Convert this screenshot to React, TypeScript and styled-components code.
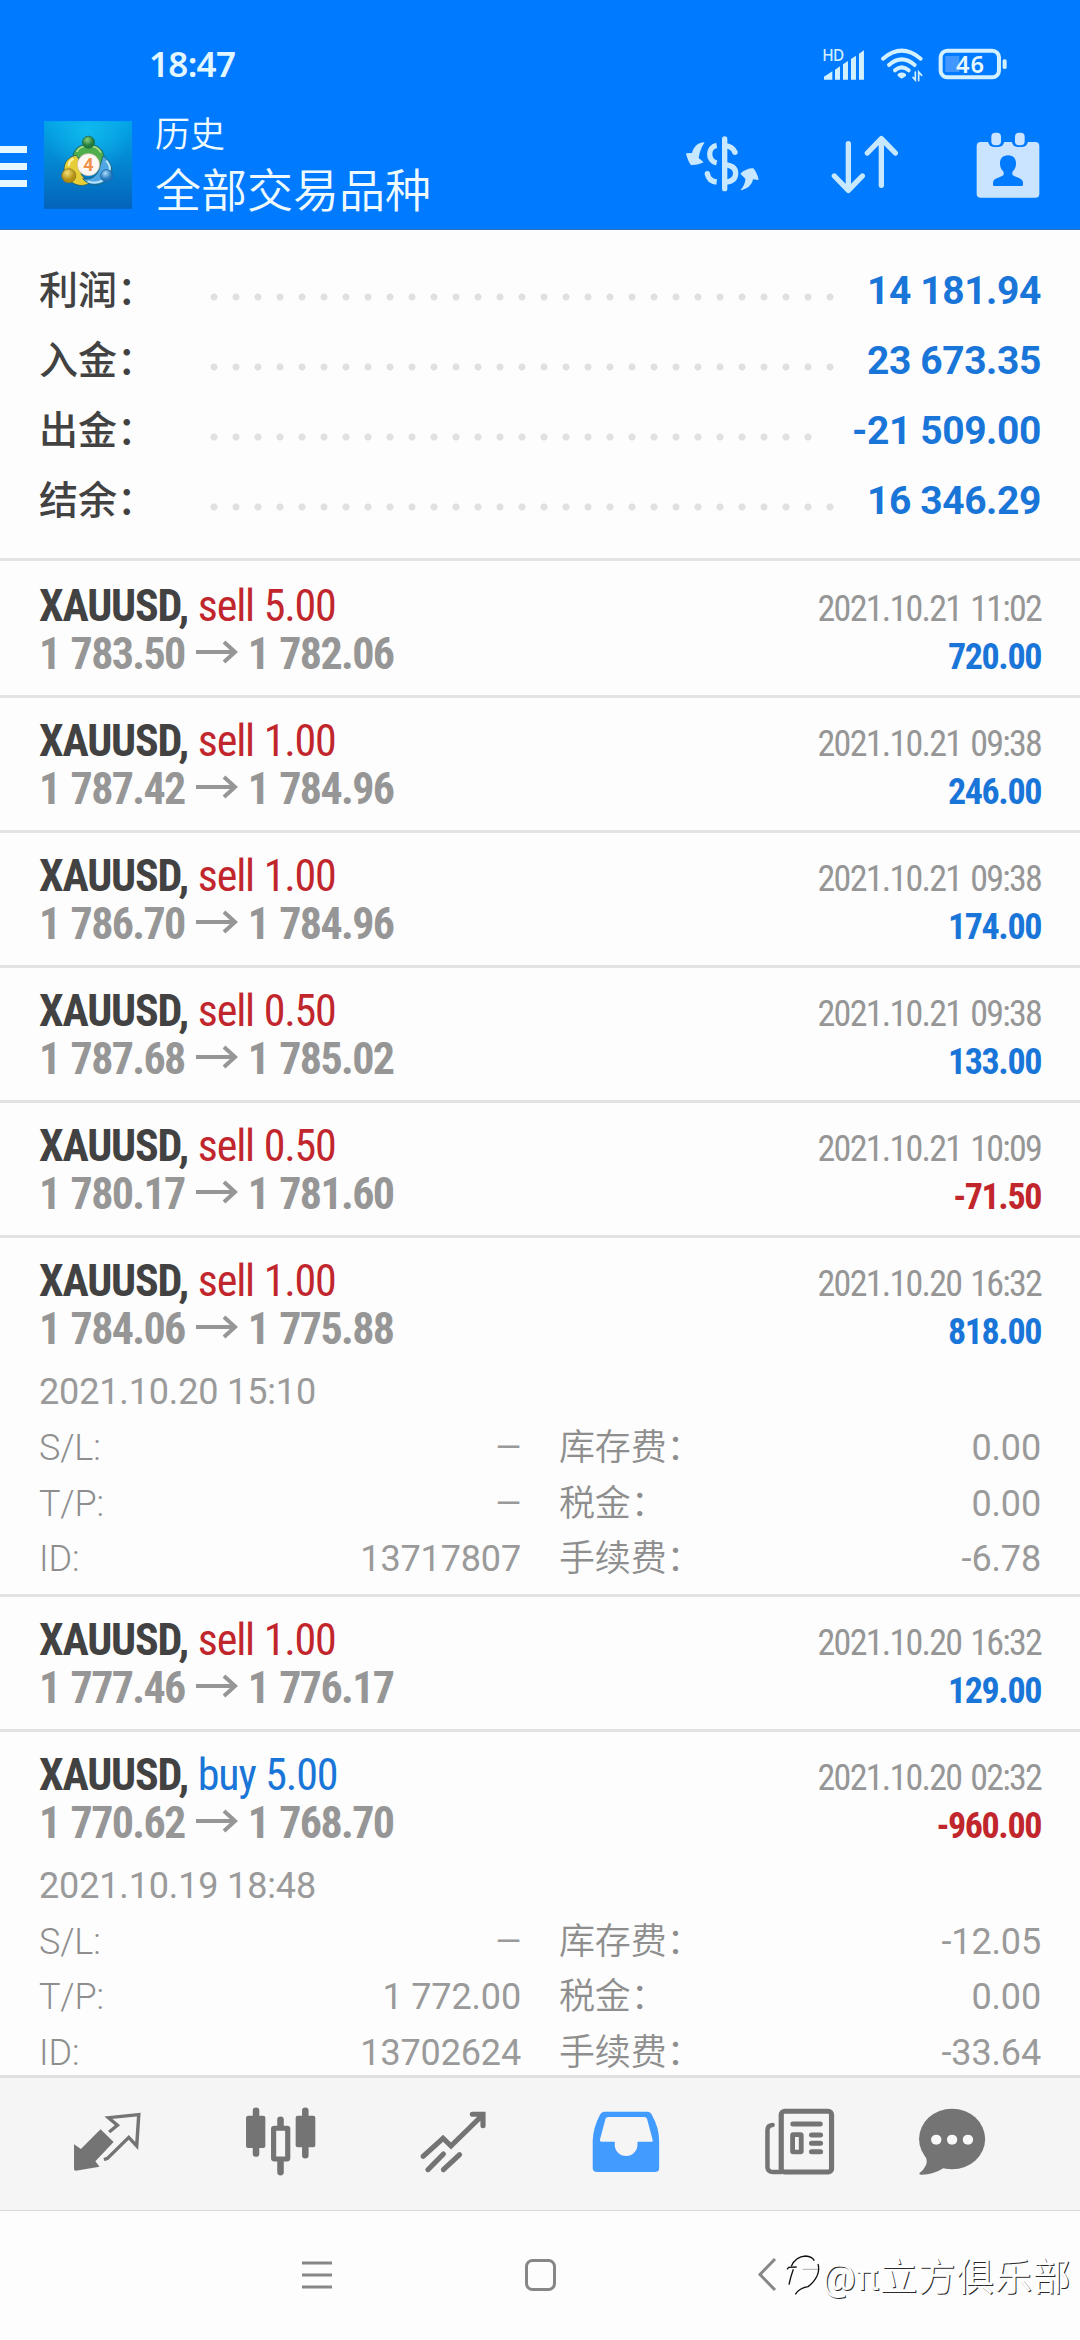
import React from "react";
import styled, { createGlobalStyle } from "styled-components";

const sans = `Roboto, "Noto Sans CJK SC", sans-serif`;
const condensed = `"Roboto Condensed", Roboto, "Noto Sans CJK SC", sans-serif`;

const GlobalStyle = createGlobalStyle`
  *, *::before, *::after { box-sizing: border-box; }
  body { margin: 0; background: #fdfdfd; }
  svg { display: block; flex: none; overflow: visible; }
`;

const Screen = styled.div`
  width: 1080px;
  height: 2340px;
  display: flex;
  flex-direction: column;
  overflow: hidden;
  background: #fdfdfd;
  font-family: ${sans};
`;

const Header = styled.header`
  flex: none;
  height: 230px;
  display: flex;
  flex-direction: column;
  background: #007aff;
  border-bottom: 1px solid #2a6fb5;
`;

const StatusBar = styled.div`
  height: 108px;
  padding: 20px 73px 0 149px;
  display: flex;
  align-items: center;
  gap: 14px;
  color: #d3f0ff;
`;

const Clock = styled.span`
  flex: 1;
  font: 600 35px/40px "Noto Sans", sans-serif;
  letter-spacing: -0.7px;
  color: #e2f7ff;
`;

const Toolbar = styled.div`
  flex: 1;
  padding-right: 40px;
  display: flex;
  align-items: center;
  color: #c8e8ff;
`;

const MenuBars = styled.div`
  width: 27px;
  height: 41px;
  margin: -4px 17px 0 0;
  display: flex;
  flex-direction: column;
  justify-content: space-between;
`;

const MenuBar = styled.span`
  height: 7px;
  background: #e6f8ff;
`;

const AppIcon = styled.svg`
  width: 88px;
  height: 88px;
  margin-top: -7px;
`;

const Titles = styled.div`
  flex: 1;
  margin: -4px 0 0 23px;
  color: #effaff;
`;

const Caption = styled.div`
  font-size: 35px;
  line-height: 48px;
  font-weight: 350;
`;

const Title = styled.div`
  font-size: 46px;
  line-height: 62px;
  font-weight: 350;
`;

const ToolIcon = styled.svg<{ $gap?: number; $lift?: number }>`
  margin-right: ${(p) => p.$gap ?? 0}px;
  margin-top: -${(p) => p.$lift ?? 0}px;
`;

const Summary = styled.section`
  flex: none;
  height: 331px;
  padding: 25px 39px 0;
  border-bottom: 3px solid #e3e3e3;
`;

const SummaryRow = styled.div`
  height: 70px;
  display: flex;
  align-items: center;
`;

const SummaryLabel = styled.span`
  width: 164px;
  padding-bottom: 7px;
  font-size: 39px;
  font-weight: 500;
  color: #424242;
`;

const Dots = styled.span`
  flex: 1;
  height: 8px;
  margin: 14px 28px 0 0;
  background: radial-gradient(circle at 11px 4px, #e0e0e0 3px, transparent 4px) 0 0 / 22px 8px repeat-x;
`;

const SummaryValue = styled.span`
  padding-top: 1px;
  font-size: 39px;
  font-weight: 700;
  letter-spacing: -0.4px;
  color: #1976d8;
`;

const List = styled.main`
  flex: 1;
  min-height: 0;
  overflow: hidden;
  padding-top: 2px;
`;

const Deal = styled.article<{ $open?: boolean }>`
  padding: 19px 39px ${(p) => (p.$open ? 7 : 17)}px;
  border-bottom: 3px solid #e3e3e3;
`;

const DealLine = styled.div`
  height: 48px;
  display: flex;
  justify-content: space-between;
  align-items: baseline;
  font-family: ${condensed};
  line-height: 48px;
  white-space: pre;
`;

const Instrument = styled.span`
  font-size: 44px;
  font-weight: 700;
  letter-spacing: -1.2px;
  word-spacing: 0.8px;
  color: #424242;
`;

const Side = styled.span<{ $side: "buy" | "sell" }>`
  font-weight: 400;
  color: ${(p) => (p.$side === "buy" ? "#1976d8" : "#c1262d")};
`;

const Prices = styled.span`
  display: flex;
  align-items: baseline;
  font-size: 44px;
  font-weight: 700;
  letter-spacing: -1.65px;
  word-spacing: 2.5px;
  color: #969696;
`;

const PriceArrow = styled.svg`
  width: 42px;
  height: 24px;
  margin: 0 10px 0 11px;
  transform: translateY(-5px);
`;

const DealTime = styled.span`
  font-size: 36px;
  letter-spacing: -1.75px;
  word-spacing: 2.5px;
  color: #969696;
`;

const Profit = styled.span<{ $loss: boolean }>`
  font-size: 36px;
  font-weight: 700;
  letter-spacing: -1.4px;
  color: ${(p) => (p.$loss ? "#c1262d" : "#1976d8")};
`;

const Details = styled.div`
  padding-top: 11px;
  font-size: 36px;
  line-height: 56px;
  font-weight: 400;
  letter-spacing: -0.15px;
  color: #9a9a9a;
`;

const DetailGrid = styled.div`
  display: grid;
  grid-template-columns: 482px 482px;
  grid-auto-rows: 55.6px;
  column-gap: 38px;
`;

const DetailCell = styled.div`
  display: flex;
  justify-content: space-between;
`;

const DetailLabel = styled.span`
  font-weight: 350;
  color: #8e8e8e;
`;

const Dash = styled.span`
  font-size: 33px;
`;

const TabBar = styled.nav`
  flex: none;
  height: 136px;
  padding: 0 21px;
  display: flex;
  align-items: center;
  background: #f5f5f5;
  border-top: 3px solid #e0e0e0;
  border-bottom: 1px solid #d8d8d8;
`;

const Tab = styled.div<{ $active?: boolean; $shift?: number }>`
  flex: none;
  width: 173px;
  padding-bottom: 5px;
  margin-left: ${(p) => p.$shift ?? 0}px;
  display: flex;
  justify-content: center;
  color: ${(p) => (p.$active ? "#429bff" : "#747474")};
`;

const SystemBar = styled.div`
  flex: none;
  height: 129px;
  padding: 0 0 2px 302px;
  display: flex;
  align-items: center;
  color: #878787;
`;

const SystemKey = styled.svg<{ $gap: number }>`
  margin-right: ${(p) => p.$gap}px;
`;

const Watermark = styled.div`
  display: flex;
  align-items: center;
  gap: 2px;
  font-size: 37.5px;
  line-height: 50px;
  color: #fff;
  text-shadow: 1px 1px 0 #2a2a2a;
  white-space: nowrap;
`;

const WatermarkText = styled.span`
  padding-top: 4px;
  letter-spacing: 0.8px;
`;

type DealInfo = {
  side: "buy" | "sell";
  lots: string;
  from: string;
  to: string;
  time: string;
  profit: string;
  details?: { opened: string; cells: [string, string][] };
};

const totals = [
  ["利润", "14 181.94"],
  ["入金", "23 673.35"],
  ["出金", "-21 509.00"],
  ["结余", "16 346.29"],
];

const deals: DealInfo[] = [
  { side: "sell", lots: "5.00", from: "1 783.50", to: "1 782.06", time: "2021.10.21 11:02", profit: "720.00" },
  { side: "sell", lots: "1.00", from: "1 787.42", to: "1 784.96", time: "2021.10.21 09:38", profit: "246.00" },
  { side: "sell", lots: "1.00", from: "1 786.70", to: "1 784.96", time: "2021.10.21 09:38", profit: "174.00" },
  { side: "sell", lots: "0.50", from: "1 787.68", to: "1 785.02", time: "2021.10.21 09:38", profit: "133.00" },
  { side: "sell", lots: "0.50", from: "1 780.17", to: "1 781.60", time: "2021.10.21 10:09", profit: "-71.50" },
  {
    side: "sell", lots: "1.00", from: "1 784.06", to: "1 775.88", time: "2021.10.20 16:32", profit: "818.00",
    details: {
      opened: "2021.10.20 15:10",
      cells: [["S/L:", "—"], ["库存费：", "0.00"], ["T/P:", "—"], ["税金：", "0.00"], ["ID:", "13717807"], ["手续费：", "-6.78"]],
    },
  },
  { side: "sell", lots: "1.00", from: "1 777.46", to: "1 776.17", time: "2021.10.20 16:32", profit: "129.00" },
  {
    side: "buy", lots: "5.00", from: "1 770.62", to: "1 768.70", time: "2021.10.20 02:32", profit: "-960.00",
    details: {
      opened: "2021.10.19 18:48",
      cells: [["S/L:", "—"], ["库存费：", "-12.05"], ["T/P:", "1 772.00"], ["税金：", "0.00"], ["ID:", "13702624"], ["手续费：", "-33.64"]],
    },
  },
];

const SignalIcon = () => (
  <svg width="43.3" height="32.7" viewBox="546 140 130 98" fill="currentColor">
    <text x="547" y="178" fontSize="46" fontWeight="500" fontFamily="Noto Sans, sans-serif" textLength="66">HD</text>
    <path d="M552 235V226L577 210V235ZM585 235V205L600 195V235ZM609 235V189L624 179V235ZM633 235V173L648 163V235ZM657 235V157L672 147V235Z" />
  </svg>
);

const WifiIcon = () => (
  <svg width="44" height="34.7" viewBox="718 143 132 104" fill="none" stroke="currentColor" strokeWidth="12" strokeLinecap="round">
    <path d="M727 178Q783 130 840 178M745 197Q783 163 822 197M763 213Q783 195 804 213" />
    <path d="M775 227Q783 221 792 227L783 233Z" strokeWidth="9" strokeLinejoin="round" />
    <path d="M824 218V242L817 234M834 244V218L843 228" strokeWidth="5" />
  </svg>
);

const BatteryIcon = () => (
  <svg width="69.3" height="32" viewBox="892 144 208 96">
    <rect x="914" y="168" width="42" height="48" fill="#4297ff" />
    <rect x="900" y="152" width="175" height="80" rx="20" fill="none" stroke="currentColor" strokeWidth="12" />
    <rect x="1086" y="178" width="12" height="29" rx="5" fill="currentColor" />
    <text x="946" y="219" fontSize="71" fontWeight="600" fontFamily="Noto Sans, sans-serif" textLength="84" fill="#e8f8ff">46</text>
  </svg>
);

const MetaLogo = () => (
  <AppIcon viewBox="0 0 263 262">
    <defs>
      <linearGradient id="tile" x1="0" y1="0" x2="0" y2="1">
        <stop offset="0" stopColor="#04a4e6" />
        <stop offset="0.5" stopColor="#0384cf" />
        <stop offset="1" stopColor="#0463ba" />
      </linearGradient>
      <radialGradient id="glow" cx="0.5" cy="0.12" r="0.5">
        <stop offset="0" stopColor="#12c0f2" stopOpacity="0.8" />
        <stop offset="1" stopColor="#12c0f2" stopOpacity="0" />
      </radialGradient>
      <radialGradient id="green" cx="0.4" cy="0.3"><stop offset="0" stopColor="#8ed07c" /><stop offset="1" stopColor="#217a3c" /></radialGradient>
      <radialGradient id="gold" cx="0.4" cy="0.3"><stop offset="0" stopColor="#f6e27a" /><stop offset="1" stopColor="#b38f12" /></radialGradient>
      <radialGradient id="sky" cx="0.4" cy="0.3"><stop offset="0" stopColor="#a8dcf8" /><stop offset="1" stopColor="#2277bd" /></radialGradient>
    </defs>
    <rect width="263" height="262" fill="url(#tile)" />
    <rect width="263" height="262" fill="url(#glow)" />
    <g stroke="#1b5d63" strokeWidth="2.5">
      <path d="M87 108C86 56 180 54 180 112C180 126 170 136 160 140L148 100L108 108L90 124Z" fill="#4fae4c" />
      <path d="M96 102C70 106 54 130 62 156C76 190 112 200 134 186L112 160L104 112Z" fill="#e6ce38" />
      <path d="M176 104C200 118 212 150 192 172C172 194 134 196 116 172C140 176 156 166 164 146Z" fill="#4ea6e2" />
    </g>
    <path d="M98 92C108 68 158 68 170 94" fill="none" stroke="#b5e08f" strokeWidth="5" />
    <path d="M74 134C74 124 80 116 88 112" fill="none" stroke="#fbf09c" strokeWidth="7" />
    <path d="M186 118C196 130 198 140 196 146M130 180C144 186 164 184 176 176" fill="none" stroke="#b7e2fa" strokeWidth="6" />
    <circle cx="133" cy="63" r="18" fill="url(#green)" stroke="#1d6b42" strokeWidth="2.5" />
    <circle cx="74" cy="163" r="21" fill="url(#gold)" stroke="#8b7626" strokeWidth="2.5" />
    <circle cx="187" cy="163" r="18" fill="url(#sky)" stroke="#1d66a6" strokeWidth="2.5" />
    <circle cx="133" cy="130" r="33" fill="#fff7f2" stroke="#c9b9a8" strokeWidth="2" />
    <text x="133" y="149" fontSize="52" fontWeight="700" fontFamily="Noto Sans, sans-serif" textAnchor="middle" fill="#ee8f4a">4</text>
  </AppIcon>
);

const CurrencyIcon = () => (
  <ToolIcon $gap={73} $lift={11} width="72.7" height="56.7" viewBox="48 44 218 170" fill="currentColor">
    <path d="M104 66C84 66 70 80 66 98L48 99C51 113 56 126 63 134C77 135 90 131 101 126L86 113C88 98 94 80 104 66Z" />
    <path d="M211 210C222 196 226 186 226 175L211 160C222 149 238 143 250 144C258 154 264 166 266 179L249 177C246 194 232 206 211 210Z" />
    <g fill="none" stroke="currentColor" strokeWidth="16">
      <path d="M164 56V205" strokeLinecap="round" />
      <path d="M140 75C112 80 112 122 140 128M164 76Q188 77 195 97" />
      <path d="M112 160Q116 182 140 185M164 133Q198 136 197 160Q196 184 164 186" />
      <path d="M112 160V160M195 96V96" strokeLinecap="round" />
    </g>
  </ToolIcon>
);

const SortIcon = () => (
  <ToolIcon $gap={77} $lift={8} width="67.7" height="59" viewBox="574 405 203 177" fill="none" stroke="currentColor" strokeWidth="16" strokeLinecap="round" strokeLinejoin="round">
    <path d="M626 431V570M584 528L626 571L668 528M725 556V418M683 459L725 416L767 459" />
  </ToolIcon>
);

const CalendarIcon = () => (
  <ToolIcon $lift={8} width="64" height="66" viewBox="1008 393 192 198" fill="#cae4ff">
    <rect x="1010" y="423" width="188" height="167" rx="12" />
    <rect x="1044" y="384" width="49" height="54" rx="18" fill="#007aff" />
    <rect x="1115" y="384" width="49" height="54" rx="18" fill="#007aff" />
    <rect x="1054" y="395" width="29" height="38" rx="12" />
    <rect x="1125" y="395" width="29" height="38" rx="12" />
    <path fill="#007aff" d="M1104 463C1121 463 1129 475 1128 490C1127 502 1122 508 1117 513V521C1124 529 1149 530 1149 545V551Q1149 555 1145 555H1063Q1059 555 1059 551V545C1059 530 1084 529 1091 521V513C1086 508 1081 502 1080 490C1079 475 1087 463 1104 463Z" />
  </ToolIcon>
);

const QuotesIcon = () => (
  <svg width="68.2" height="59.3" viewBox="216 157 198 178" preserveAspectRatio="none" fill="currentColor">
    <path d="M219 254L239 268L296 209L334 247L281 305L293 321L224 333Q219 333 219 328Z" />
    <path d="M321 217L345 197L319 174L407 165L401 259L378 233L316 296L306 300" fill="none" stroke="currentColor" strokeWidth="10" />
  </svg>
);

const CandlesIcon = () => (
  <svg width="71" height="69.3" viewBox="713 142 206 208" preserveAspectRatio="none" fill="none" stroke="currentColor" strokeLinecap="round">
    <path d="M745 153V282M888 153V287M816 180V200M816 306V338" strokeWidth="19" />
    <rect x="716" y="168" width="56" height="97" rx="6" fill="currentColor" stroke="none" />
    <rect x="860" y="168" width="57" height="95" rx="6" fill="currentColor" stroke="none" />
    <rect x="796" y="206" width="41" height="92" rx="2" strokeWidth="15" fill="#f5f5f5" />
  </svg>
);

const TrendIcon = () => (
  <svg width="66.8" height="62" viewBox="1222 150 194 186" preserveAspectRatio="none" fill="none" stroke="currentColor" strokeWidth="15" strokeLinecap="round">
    <path d="M1231 286L1289 232L1312 255L1404 162M1374 160H1405V194M1245 326L1290 279M1290 326L1337 281" />
  </svg>
);

const InboxIcon = () => (
  <svg width="68.2" height="61.3" viewBox="155 150 198 184" preserveAspectRatio="none" fill="currentColor">
    <path fillRule="evenodd" d="M190 152H316Q324 152 329 162Q350 200 350 240V320Q350 333 338 333H170Q157 333 157 320V240Q158 200 179 160Q183 152 190 152ZM202 168Q196 168 194 174L178 236Q177 242 183 242H221V252A33 33 0 0 0 287 252V242H328Q333 242 331 236L315 174Q313 168 307 168Z" />
  </svg>
);

const NewsIcon = () => (
  <svg width="71" height="67.3" viewBox="655 142 206 202" preserveAspectRatio="none" fill="none" stroke="currentColor" strokeLinecap="round">
    <rect x="705" y="152" width="146" height="182" rx="10" strokeWidth="15" />
    <path d="M680 193Q665 194 665 209V318Q665 334 682 334H705" strokeWidth="13" />
    <path d="M739 190H818M793 223H819M793 248H819M793 273H819" strokeWidth="15" />
    <rect x="738" y="222" width="25" height="52" rx="2" strokeWidth="14" />
  </svg>
);

const ChatIcon = () => (
  <svg width="68.2" height="67.3" viewBox="1100 142 198 202" preserveAspectRatio="none" fill="currentColor">
    <ellipse cx="1199" cy="235" rx="96" ry="91" />
    <path d="M1116 278Q1129 296 1124 311Q1116 330 1104 337Q1103 343 1111 342Q1146 341 1176 321Z" />
    <g fill="#f8f8f8">
      <circle cx="1153" cy="237" r="15" />
      <circle cx="1199" cy="237" r="15" />
      <circle cx="1245" cy="237" r="15" />
    </g>
  </svg>
);

const WatermarkLogo = () => (
  <svg width="34" height="42" viewBox="46 66 102 126" fill="none" stroke="#111" strokeWidth="4">
    <path d="M49 112L54 106L78 105M62 103Q74 74 105 72Q124 73 131 86M68 112Q60 134 55 158M142 96Q147 112 140 130Q130 152 112 164Q86 168 74 187" />
    <path d="M96 112H142" strokeWidth="2" stroke="#888" />
  </svg>
);

export default function App() {
  return (
    <Screen>
      <GlobalStyle />
      <Header>
        <StatusBar>
          <Clock>18:47</Clock>
          <SignalIcon />
          <WifiIcon />
          <BatteryIcon />
        </StatusBar>
        <Toolbar>
          <MenuBars><MenuBar /><MenuBar /><MenuBar /></MenuBars>
          <MetaLogo />
          <Titles>
            <Caption>历史</Caption>
            <Title>全部交易品种</Title>
          </Titles>
          <CurrencyIcon />
          <SortIcon />
          <CalendarIcon />
        </Toolbar>
      </Header>
      <Summary>
        {totals.map(([label, value]) => (
          <SummaryRow key={label}>
            <SummaryLabel>{label}：</SummaryLabel>
            <Dots />
            <SummaryValue>{value}</SummaryValue>
          </SummaryRow>
        ))}
      </Summary>
      <List>
        {deals.map((d, i) => (
          <Deal key={i} $open={!!d.details}>
            <DealLine>
              <Instrument>XAUUSD, <Side $side={d.side}>{d.side} {d.lots}</Side></Instrument>
              <DealTime>{d.time}</DealTime>
            </DealLine>
            <DealLine>
              <Prices>
                {d.from}
                <PriceArrow viewBox="0 0 42 24" fill="none" stroke="currentColor" strokeWidth="4">
                  <path d="M0 12H40M28 2L39 12L28 22" />
                </PriceArrow>
                {d.to}
              </Prices>
              <Profit $loss={d.profit.startsWith("-")}>{d.profit}</Profit>
            </DealLine>
            {d.details && (
              <Details>
                {d.details.opened}
                <DetailGrid>
                  {d.details.cells.map(([k, v]) => (
                    <DetailCell key={k}>
                      <DetailLabel>{k}</DetailLabel>
                      {v === "—" ? <Dash>{v}</Dash> : <span>{v}</span>}
                    </DetailCell>
                  ))}
                </DetailGrid>
              </Details>
            )}
          </Deal>
        ))}
      </List>
      <TabBar>
        <Tab><QuotesIcon /></Tab>
        <Tab><CandlesIcon /></Tab>
        <Tab><TrendIcon /></Tab>
        <Tab $active><InboxIcon /></Tab>
        <Tab><NewsIcon /></Tab>
        <Tab $shift={-20}><ChatIcon /></Tab>
      </TabBar>
      <SystemBar>
        <SystemKey $gap={193} width="30" height="28" viewBox="0 0 30 28" stroke="currentColor" strokeWidth="3">
          <path d="M0 2H30M0 14H30M0 26H30" />
        </SystemKey>
        <SystemKey $gap={202} width="31" height="32" viewBox="0 0 31 32" fill="none" stroke="currentColor" strokeWidth="3">
          <rect x="1.5" y="1.5" width="28" height="29" rx="6" />
        </SystemKey>
        <SystemKey $gap={10} width="18" height="33" viewBox="0 0 18 33" fill="none" stroke="currentColor" strokeWidth="3">
          <path d="M17 1L2 16.5L17 32" />
        </SystemKey>
        <Watermark>
          <WatermarkLogo />
          <WatermarkText>@π立方俱乐部</WatermarkText>
        </Watermark>
      </SystemBar>
    </Screen>
  );
}
